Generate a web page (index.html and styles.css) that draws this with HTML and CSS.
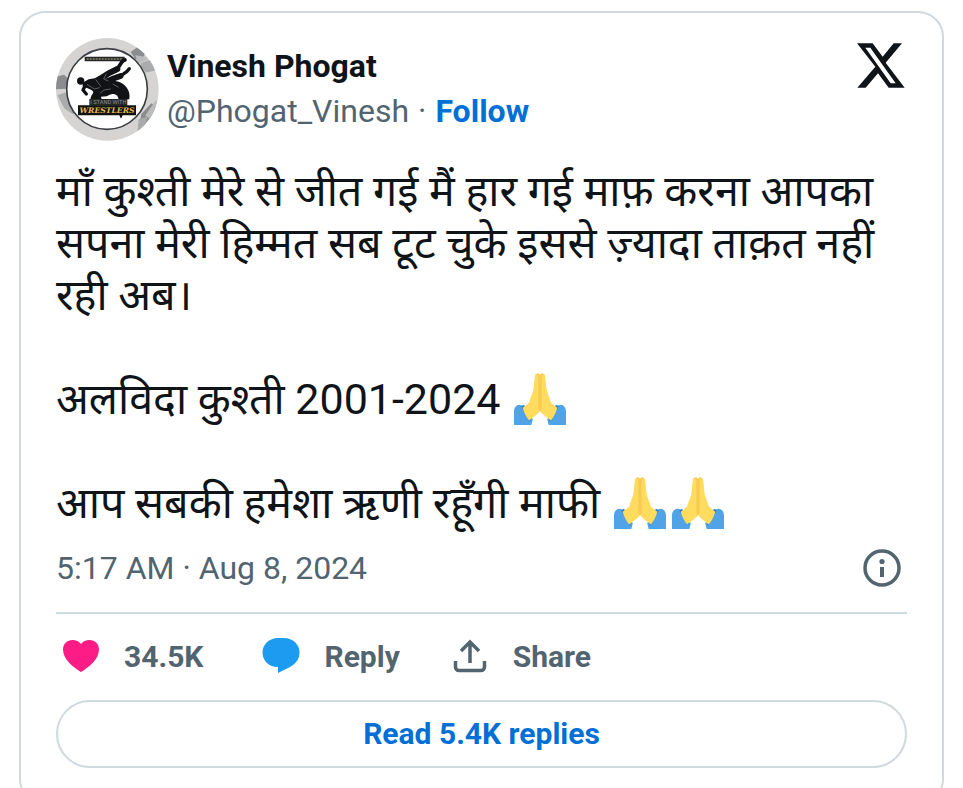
FILE: index.html
```html
<!DOCTYPE html>
<html lang="en">
<head>
  <meta charset="utf-8">
  <title>Vinesh Phogat on X</title>
  <meta name="viewport" content="width=device-width, initial-scale=1">
  <link rel="icon" href="data:,">
  <link rel="stylesheet" href="styles.css">
</head>

<body>
  <!-- shared emoji -->
  <svg class="sprite" aria-hidden="true">
    <symbol id="hands" viewBox="0 0 36 36">
      <path fill="#4fa3e6" d="M0 36V27c0-3 1.500-5 4-5l3 1 6 9-1 4zM36 36V27c0-3-1.500-5-4-5l-3 1-6 9 1 4z"/>
      <path fill="#2b7fc0" d="M5 23l2-1 5 10-1 1.500zM31 23l-2-1-5 10 1 1.500z"/>
      <path fill="#ffdc5d" d="M18 1.500C17 0 14.800 0 14.400 2L13.600 10c-.2 4-2.600 7-3 10.500L6 24c1 3.500 2.500 6.500 4.500 8.800L16 28.500c1-.7 1.700-1.500 2-2.500.3 1 1 1.800 2 2.500l5.500 4.300c2-2.300 3.500-5.300 4.500-8.800l-4.600-3.500c-.4-3.500-2.800-6.500-3-10.500L21.600 2C21.200 0 19 0 18 1.500z"/>
      <path fill="#f9ca55" d="M15.500.8c1-.8 2-.3 2.500.7.500-1 1.500-1.500 2.500-.7-1 .7-1.300 1.700-1.300 3V24c0 1-.6 2-1.200 2.500-.6-.5-1.200-1.500-1.200-2.500V3.800c0-1.300-.3-2.300-1.300-3z"/>
    </symbol>
  </svg>

  <article class="tweet">
    <header class="header">
      <a class="avatar" href="#" aria-label="Vinesh Phogat profile">
        <svg viewBox="18 12 309 309" aria-hidden="true">
          <defs>
            <clipPath id="round"><circle cx="172" cy="166" r="154"/></clipPath>
          </defs>
          <g clip-path="url(#round)">
            <path fill="#d5d4d3" d="M18 12h309v309H18z"/>
            <path fill="#8b8c8d" d="M242 54l20-14 24 16-8 18-22 2zM18 128l24-6 14 12-8 30-30 2zM266 290l8-50 30-32 16 12-18 44-28 26z"/>
            <path fill="#aaabac" d="M272 88l38-14 10 34-32 8-12-14zM22 184l34-12 6 26 22 40-16 2-24-16zM266 256l26-8-6 30-24 16z"/>
            <path fill="#bbbcbc" d="M256 64l30 4 8 10-30 10zM286 244l32-46 10 20-26 40z"/>
            <circle cx="171" cy="165" r="121" fill="#fff" stroke="#3b3e43" stroke-width="5"/>
            <path fill="#26272a" d="M104 68h120v14H104z"/>
            <path stroke="#8d8570" stroke-width="5" stroke-dasharray="6 3" d="M110 75h108"/>
            <!-- thrown wrestler -->
            <g fill="none" stroke="#101216" stroke-linecap="round" stroke-linejoin="round">
              <path stroke-width="18" d="M148 136l26-17 28-14"/>
              <path stroke-width="11" d="M202 105l12-19 6-6 5-2"/>
              <path stroke-width="17" d="M160 146l26-11 26-9"/>
              <path stroke-width="10" d="M212 126l19-14 7-8"/>
              <path stroke-width="10" d="M104 158l-5 10 10 12M116 158l18 10"/>
            </g>
            <circle cx="92" cy="141" r="11" fill="#101216"/>
            <path fill="#101216" d="M98 146l18-10 18-3 14-7 24 14-8 16h-26l-20 8-20-6z"/>
            <!-- standing wrestler -->
            <path fill="#101216" d="M126 163l16-14 26-4 24-5c20 2 38 14 44 32 3 8 3 16 2 24h-32l-4-11c-10-9-22-5-32 2l-17 1 2 8h-34l3-11 6-9z"/>
            <path fill="#fff" d="M172 194l8-8 12-2 12 10z"/>
            <path fill="none" stroke="#85878a" stroke-width="2" d="M111 151l22 14 16-4M137 136l16 22M169 119l-8 16 14 6M150 178l12-10 20-3M188 150l18 10"/>
            <path fill="#26272a" d="M118 195h114v20H118z"/>
            <path fill="#111" d="M84 214h174v30h-40l-5 10-5-10H84z"/>
            <text class="stand" x="175" y="211" text-anchor="middle">I STAND WITH</text>
            <text class="wrestlers" x="171" y="237" text-anchor="middle">WRESTLERS</text>
          </g>
        </svg>
      </a>
      <div class="author">
        <a class="name" href="#">Vinesh Phogat</a>
        <div class="handle-row">
          <a class="handle" href="#">@Phogat_Vinesh</a>
          <span>·</span>
          <a class="follow" href="#">Follow</a>
        </div>
      </div>
      <a class="logo" href="#" aria-label="View on X">
        <svg viewBox="52 37 144 135" aria-hidden="true">
          <path fill="#0f1419" fill-rule="evenodd" d="M52 38h47l30 40 33-40h25l-49 58 57 75h-48l-32-43-37 43H53l54-63zM77 51l76 107h15L92 51z"/>
        </svg>
      </a>
    </header>

    <div class="text" lang="hi">
      <p>माँ कुश्ती मेरे से जीत गई मैं हार गई माफ़ करना आपका सपना मेरी हिम्मत सब टूट चुके इससे ज़्यादा ताक़त नहीं रही अब।</p>
      <p>अलविदा कुश्ती 2001-2024 <svg class="emoji" role="img" aria-label="Folded hands"><use href="#hands"/></svg></p>
      <p>आप सबकी हमेशा ऋणी रहूँगी माफी <svg class="emoji" role="img" aria-label="Folded hands"><use href="#hands"/></svg><svg class="emoji" role="img" aria-label="Folded hands"><use href="#hands"/></svg></p>
    </div>

    <div class="meta">
      <a class="time" href="#">5:17 AM · Aug 8, 2024</a>
      <a class="info" href="#" aria-label="Ads info and privacy">
        <svg viewBox="0 0 38 38" fill="none" aria-hidden="true">
          <circle cx="19" cy="19" r="17" stroke="#536471" stroke-width="3.500"/>
          <circle cx="19" cy="12.500" r="2.600" fill="#536471"/>
          <path fill="#536471" d="M17 18h4v10h-4z"/>
        </svg>
      </a>
    </div>

    <div class="actions">
      <button class="action like" type="button">
        <svg viewBox="0 0 38 38" aria-hidden="true">
          <path fill="#fd1b86" d="M19 35C12 30.500 1 23 1 12.500 1 7 5 3 10.500 3c3.500 0 6.500 1.500 8.500 4 2-2.500 5-4 8.500-4C33 3 37 7 37 12.500 37 23 26 30.500 19 35z"/>
        </svg>
        <span>34.5K</span>
      </button>
      <button class="action reply" type="button">
        <svg viewBox="0 0 38 38" aria-hidden="true">
          <path fill="#1d9bf0" d="M16 1h6c9 0 15.500 6.500 15.500 14.500 0 7-4 11.500-10.500 15L16 36v-6C7 30 .5 24 .5 15.500.5 7.500 7 1 16 1z"/>
        </svg>
        <span>Reply</span>
      </button>
      <button class="action" type="button">
        <svg viewBox="0 0 38 38" fill="none" stroke="#536471" stroke-width="3.500" aria-hidden="true">
          <path d="M19 26V5M10 14l9-9 9 9M4.500 24v6c0 2 1.500 3.500 3.500 3.500h22c2 0 3.500-1.500 3.500-3.500v-6"/>
        </svg>
        <span>Share</span>
      </button>
    </div>

    <a class="replies" href="#">Read 5.4K replies</a>
  </article>
</body>
</html>
```
FILE: styles.css
```css
* {
  box-sizing: border-box;
}
body {
  margin: 0;
  padding: 11px 19px;
  background: #fff;
  color: #0f1419;
  font-family: Roboto, "Noto Sans", sans-serif;
}
a {
  color: inherit;
  text-decoration: none;
}
p {
  margin: 0;
}
svg {
  display: block;
}
.sprite {
  position: absolute;
  width: 0;
  height: 0;
}
.tweet {
  padding: 25px 35px 35px;
  border: 2px solid #cfd9de;
  border-radius: 26px;
}

/* header */
.header {
  display: flex;
  align-items: flex-start;
}
.avatar svg {
  width: 103px;
  height: 103px;
}
.stand {
  font: 17px Roboto, sans-serif;
  fill: #8b8c90;
}
.wrestlers {
  font: italic bold 23px "DejaVu Serif", serif;
  fill: #e2b84f;
}
.author {
  flex: 1;
  margin-left: 8px;
  padding-top: 6px;
  font-size: 32px;
  line-height: 45px;
}
.name {
  display: block;
  font-weight: 700;
}
.handle-row {
  display: flex;
  gap: 9px;
  color: #536471;
}
.follow {
  color: #006fd6;
  font-weight: 700;
}
.logo {
  padding: 5px 2px 0 0;
}
.logo svg {
  width: 48px;
  height: 45px;
}

/* body text */
.text {
  margin-top: 24px;
  font-size: 43px;
  line-height: 52px;
}
.text p + p {
  margin-top: 52px;
}
.emoji {
  display: inline-block;
  width: 52px;
  height: 52px;
  margin: 0 3px;
  vertical-align: top;
}

.meta {
  display: flex;
  justify-content: space-between;
  align-items: center;
  height: 85px;
  padding: 0 6px 5px 0;
  border-bottom: 2px solid #cfd9de;
  color: #536471;
  font-size: 32px;
}
.info svg {
  width: 38px;
  height: 38px;
}

/* actions */
.actions {
  display: flex;
  gap: 59px;
  height: 86px;
  padding: 0 0 2px 6px;
}
.action {
  display: flex;
  align-items: center;
  gap: 24px;
  padding: 0;
  border: 0;
  background: none;
  color: #536471;
  font: 700 30px Roboto, sans-serif;
}
.reply {
  margin-right: -8px;
}
.action svg {
  width: 38px;
  height: 38px;
}
.replies {
  display: block;
  border: 2px solid #cfd9de;
  border-radius: 34px;
  color: #006fd6;
  font-size: 30px;
  font-weight: 700;
  line-height: 64px;
  text-align: center;
}
```
